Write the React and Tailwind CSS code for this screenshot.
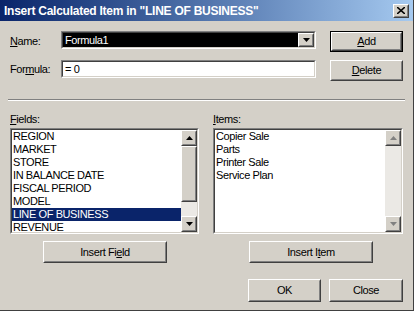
import React from "react";

const fields = [
  "REGION",
  "MARKET",
  "STORE",
  "IN BALANCE DATE",
  "FISCAL PERIOD",
  "MODEL",
  "LINE OF BUSINESS",
  "REVENUE",
];
const items = ["Copier Sale", "Parts", "Printer Sale", "Service Plan"];

const Raised = ({ className = "", children }) => (
  <div className={`border border-t-white border-l-white border-r-[#404040] border-b-[#404040] bg-[#d4d0c8] ${className}`}>
    <div className="w-full h-full border border-t-[#d4d0c8] border-l-[#d4d0c8] border-r-[#808080] border-b-[#808080] flex items-center justify-center">
      {children}
    </div>
  </div>
);

const Sunken = ({ className = "", children }) => (
  <div className={`border border-t-[#808080] border-l-[#808080] border-r-white border-b-white ${className}`}>
    <div className="w-full h-full border border-t-[#404040] border-l-[#404040] border-r-[#d4d0c8] border-b-[#d4d0c8] bg-white flex overflow-hidden">
      {children}
    </div>
  </div>
);

const Arrow = ({ up, color = "#000" }) => (
  <svg width="7" height="4" viewBox="0 0 7 4">
    {up ? (
      <path d="M3.5 0 L7 4 L0 4 Z" fill={color} />
    ) : (
      <path d="M0 0 L7 0 L3.5 4 Z" fill={color} />
    )}
  </svg>
);

const Scrollbar = ({ disabled }) => (
  <div className="w-[16px] h-full flex flex-col bg-[#ebe9e5]">
    <Raised className="w-[16px] h-[16px] shrink-0">
      <Arrow up color={disabled ? "#808080" : "#000"} />
    </Raised>
    {disabled ? (
      <div className="flex-1" />
    ) : (
      <>
        <Raised className="w-[16px] h-[56px] shrink-0" />
        <div className="flex-1" />
      </>
    )}
    <Raised className="w-[16px] h-[16px] shrink-0">
      <Arrow color={disabled ? "#808080" : "#000"} />
    </Raised>
  </div>
);

export default function App() {
  return (
    <div className="w-[414px] h-[311px] bg-[#d4d0c8] font-['Liberation_Sans',Arial,sans-serif] text-[11px] tracking-[-0.4px] text-black flex flex-col border-r border-b border-r-[#404040] border-b-[#404040] overflow-hidden">
      <div className="h-[21px] shrink-0 flex items-center justify-between pl-[4px] pr-[4px] bg-gradient-to-r from-[#0a246a] to-[#a6caf0]">
        <span className="text-white font-bold text-[12px] tracking-[-0.25px] whitespace-nowrap">
          Insert Calculated Item in "LINE OF BUSINESS"
        </span>
        <Raised className="w-[16px] h-[14px]">
          <svg width="8" height="7" viewBox="0 0 8 7">
            <path d="M0 0 L8 7 M8 0 L0 7" stroke="#000" strokeWidth="1.6" />
          </svg>
        </Raised>
      </div>

      <div className="flex flex-col pl-[10px] pr-[10px]">
        <div className="flex items-start mt-[10px] h-[21px]">
          <div className="w-[51px] leading-[18px] pt-[1px]">
            <span className="underline">N</span>ame:
          </div>
          <Sunken className="w-[255px] h-[18px]">
            <div className="flex-1 bg-black text-white leading-[14px] pl-[2px]">Formula1</div>
            <Raised className="w-[16px] h-[14px] shrink-0">
              <Arrow />
            </Raised>
          </Sunken>
          <div className="ml-[14px] w-[73px] h-[21px] border border-black">
            <Raised className="w-full h-full">
              <span>
                <span className="underline">A</span>dd
              </span>
            </Raised>
          </div>
        </div>

        <div className="flex items-start mt-[8px] h-[21px]">
          <div className="w-[51px] leading-[18px]">
            For<span className="underline">m</span>ula:
          </div>
          <Sunken className="w-[255px] h-[18px]">
            <div className="flex-1 leading-[14px] pl-[2px]">= 0</div>
          </Sunken>
          <Raised className="ml-[14px] w-[73px] h-[21px]">
            <span>
              <span className="underline">D</span>elete
            </span>
          </Raised>
        </div>

        <div className="mt-[18px] -ml-[2px] w-[397px] h-[2px] border-t border-t-[#808080] border-b border-b-white" />

        <div className="flex mt-[12px] gap-[14px]">
          <div className="flex flex-col w-[189px]">
            <div className="h-[13px] leading-[13px] mb-[2px]">
              <span className="underline">F</span>ields:
            </div>
            <Sunken className="w-[189px] h-[106px]">
              <div className="flex-1 flex flex-col">
                {fields.map((f, i) => (
                  <div
                    key={f}
                    className={`h-[13px] leading-[13px] pl-[1px] whitespace-nowrap ${i === 6 ? "bg-[#0a246a] text-white" : ""}`}
                  >
                    {f}
                  </div>
                ))}
              </div>
              <Scrollbar />
            </Sunken>
          </div>
          <div className="flex flex-col w-[190px]">
            <div className="h-[13px] leading-[13px] mb-[2px]">
              <span className="underline">I</span>tems:
            </div>
            <Sunken className="w-[190px] h-[106px]">
              <div className="flex-1 flex flex-col pl-[1px]">
                {items.map((f) => (
                  <div key={f} className="h-[13px] leading-[13px] whitespace-nowrap">
                    {f}
                  </div>
                ))}
              </div>
              <Scrollbar disabled />
            </Sunken>
          </div>
        </div>

        <div className="flex mt-[7px]">
          <Raised className="ml-[33px] w-[124px] h-[22px]">
            <span>
              Insert Fi<span className="underline">e</span>ld
            </span>
          </Raised>
          <Raised className="ml-[82px] w-[124px] h-[22px]">
            <span>
              Insert I<span className="underline">t</span>em
            </span>
          </Raised>
        </div>

        <div className="flex justify-end mt-[16px] gap-[8px]">
          <Raised className="w-[73px] h-[23px]">OK</Raised>
          <Raised className="w-[74px] h-[23px]">Close</Raised>
        </div>
      </div>
    </div>
  );
}
